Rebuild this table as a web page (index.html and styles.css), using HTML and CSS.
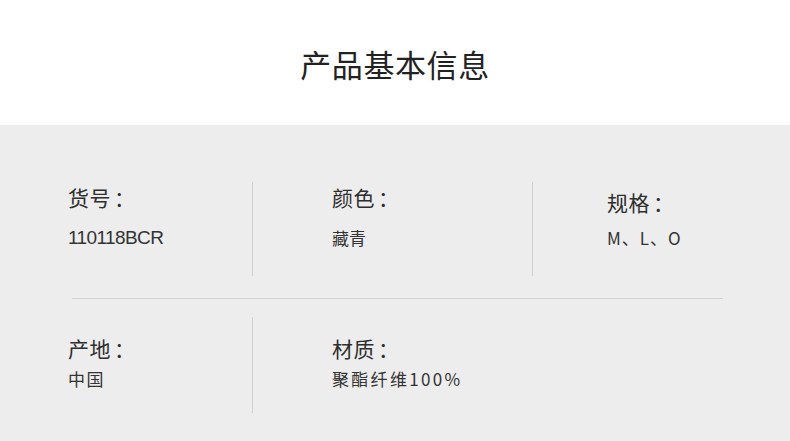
FILE: index.html
```html
<!DOCTYPE html>
<html lang="zh-CN">
<head>
<meta charset="utf-8">
<link rel="stylesheet" href="styles.css">
</head>
<body>
<header class="head">
  <h1 class="title">产品基本信息</h1>
</header>
<section class="info">
  <div class="row row-top">
    <div class="cell c1"><div class="label">货号<span class="colon">：</span></div><div class="value v-code">110118BCR</div></div>
    <div class="cell c2"><div class="label">颜色<span class="colon">：</span></div><div class="value">藏青</div></div>
    <div class="cell c3 last"><div class="label">规格<span class="colon">：</span></div><div class="value v-size">M、L、O</div></div>
  </div>
  <div class="hr"></div>
  <div class="row row-bottom">
    <div class="cell c1"><div class="label">产地<span class="colon">：</span></div><div class="value v-place">中国</div></div>
    <div class="cell c2 last"><div class="label">材质<span class="colon">：</span></div><div class="value v-mat">聚酯纤维100%</div></div>
  </div>
</section>
</body>
</html>
```

FILE: styles.css
```css
* { box-sizing: border-box; margin: 0; padding: 0; }
html, body { width: 790px; height: 441px; overflow: hidden; }
body {
  font-family: "Noto Sans CJK SC", "Noto Sans", sans-serif;
  color: #333;
  background: #ededed;
}
.head {
  height: 125px;
  background: #fff;
  display: flex;
  align-items: center;
  justify-content: center;
}
.title {
  font-size: 31px;
  font-weight: 400;
  letter-spacing: 0.6px;
  color: #222;
  margin-top: 2px;
}
.info {
  padding: 57px 0 0 68px;
}
.row {
  display: grid;
  grid-template-columns: 185px 280px 1fr;
}
.row-top { height: 94px; }
.row-bottom { height: 96px; }
.cell {
  border-right: 1px solid #cfcfcf;
}
.cell.last { border-right: none; }
.c2 { padding-left: 79px; }
.c3 { padding-left: 74px; }
.label {
  font-size: 21px;
  line-height: 24px;
  letter-spacing: 0.5px;
  color: #2e2e2e;
}
.colon { margin-left: 3px; }
.row-top .label { margin-top: 3px; }
.row-top .c3 .label { margin-top: 8px; }
.row-top .value { margin-top: 19px; }
.row-top .c3 .value { margin-top: 14px; }
.row-bottom .label { margin-top: 19px; }
.row-bottom .value { margin-top: 9px; }
.value {
  font-size: 17px;
  line-height: 20px;
  color: #333;
}
.v-code {
  font-family: "Liberation Sans", sans-serif;
  font-size: 19px;
  letter-spacing: -0.6px;
}
.v-size { letter-spacing: 1px; }
.v-place { letter-spacing: 1.5px; }
.v-mat { letter-spacing: 2.3px; }
.hr {
  margin: 22px 0 18px 4px;
  width: 651px;
  height: 1px;
  background: #d3d3d3;
}
```
